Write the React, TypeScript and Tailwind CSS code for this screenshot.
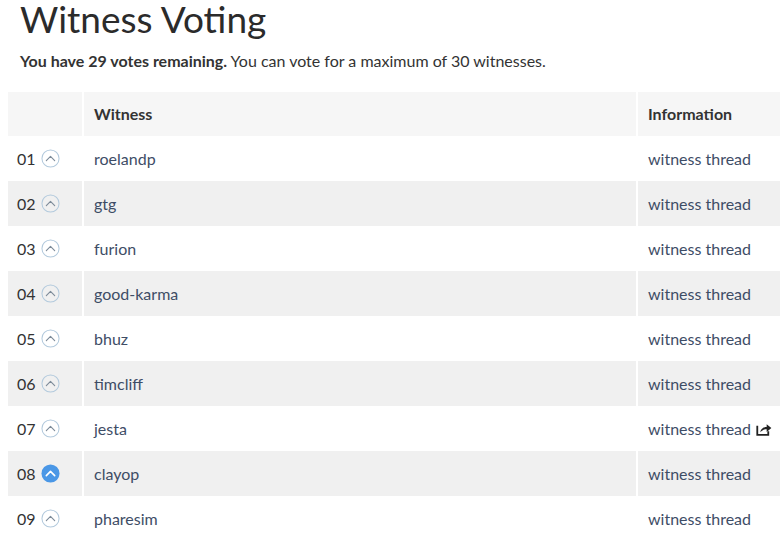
import React from "react";

const witnesses = [
  "roelandp",
  "gtg",
  "furion",
  "good-karma",
  "bhuz",
  "timcliff",
  "jesta",
  "clayop",
  "pharesim",
];

function UpvoteIcon({ active }: { active: boolean }) {
  if (active) {
    return (
      <svg width="19" height="19" viewBox="0 0 20 20">
        <circle cx="10" cy="10" r="9.5" fill="#4a97e6" />
        <path d="M5.6 12.2 L10 7.8 L14.4 12.2" fill="none" stroke="#fff" strokeWidth="1.7" strokeLinecap="round" strokeLinejoin="round" />
      </svg>
    );
  }
  return (
    <svg width="19" height="19" viewBox="0 0 20 20">
      <circle cx="10" cy="10" r="9" fill="none" stroke="#b3cadd" strokeWidth="1.1" />
      <path d="M5.6 12.2 L10 7.8 L14.4 12.2" fill="none" stroke="#7d8b99" strokeWidth="1.2" strokeLinecap="round" strokeLinejoin="round" />
    </svg>
  );
}

function ExternalIcon() {
  return (
    <svg width="16" height="14" viewBox="0 0 15 13">
      <path d="M1.2 3.5 V12 H11.5 V8.5" fill="none" stroke="#222" strokeWidth="1.7" />
      <path d="M4 9.6 C4.4 6 7 4.6 10 4.6 V2 L14.4 5.6 L10 9.2 V6.8 C7.6 6.8 5.5 7.6 4 9.6 Z" fill="#222" />
    </svg>
  );
}

export default function App() {
  return (
    <div
      className="w-[780px] h-[542px] overflow-hidden bg-white text-[#333]"
      style={{ fontFamily: "Lato, 'Noto Sans', sans-serif" }}
    >
      <h1 className="pl-[20px] text-[37px] leading-[38px] font-normal text-[#2b2b2b]">
        Witness Voting
      </h1>
      <p className="mt-[12px] pl-[20px] text-[16px] leading-[22px] text-[#333]">
        <span className="font-bold">You have 29 votes remaining.</span> You can vote for a maximum of 30 witnesses.
      </p>
      <div className="mt-[20px] ml-[8px] flex flex-col">
        <div className="flex h-[44px] gap-[2px] bg-white text-[16px] font-bold text-[#333]">
          <div className="w-[74px] bg-[#f6f6f6]" />
          <div className="w-[552px] flex items-center pl-[10px] bg-[#f6f6f6]">Witness</div>
          <div className="flex-1 flex items-center pl-[10px] bg-[#f6f6f6]">Information</div>
        </div>
        {witnesses.map((name, i) => {
          const striped = i % 2 === 1;
          const bg = striped ? "bg-[#f0f0f0]" : "bg-white";
          return (
            <div key={name} className="flex h-[45px] gap-[2px] text-[16px]">
              <div className={`w-[74px] flex items-center pl-[9px] gap-[5px] ${bg}`}>
                <span className="text-[#333]">{String(i + 1).padStart(2, "0")}</span>
                <UpvoteIcon active={i === 7} />
              </div>
              <div className={`w-[552px] flex items-center pl-[10px] text-[#3e4d66] ${bg}`}>{name}</div>
              <div className={`flex-1 flex items-center pl-[10px] gap-[5px] text-[#3e4d66] ${bg}`}>
                <span>witness thread</span>
                {i === 6 && <ExternalIcon />}
              </div>
            </div>
          );
        })}
      </div>
    </div>
  );
}
